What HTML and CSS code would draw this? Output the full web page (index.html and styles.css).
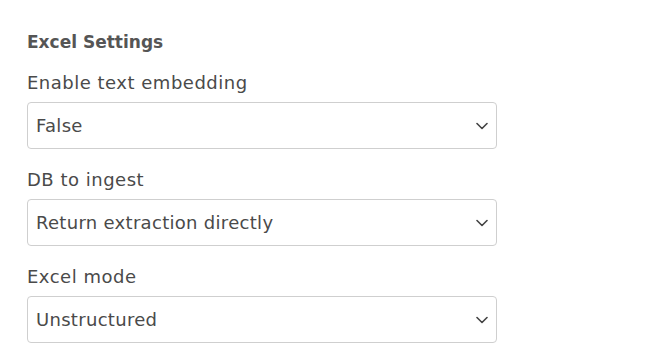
FILE: index.html
```html
<!DOCTYPE html>
<html>
<head>
<meta charset="utf-8">
<link rel="stylesheet" href="styles.css">
</head>
<body>
<div class="panel">
  <h2 class="title">Excel Settings</h2>
  <div class="field">
    <label class="label">Enable text embedding</label>
    <div class="select"><span>False</span><svg class="chev" width="12" height="8" viewBox="0 0 12 8"><path d="M1 1.5 L6 6.5 L11 1.5" fill="none" stroke="#444" stroke-width="1.6" stroke-linecap="round" stroke-linejoin="round"/></svg></div>
  </div>
  <div class="field">
    <label class="label">DB to ingest</label>
    <div class="select"><span>Return extraction directly</span><svg class="chev" width="12" height="8" viewBox="0 0 12 8"><path d="M1 1.5 L6 6.5 L11 1.5" fill="none" stroke="#444" stroke-width="1.6" stroke-linecap="round" stroke-linejoin="round"/></svg></div>
  </div>
  <div class="field">
    <label class="label">Excel mode</label>
    <div class="select"><span>Unstructured</span><svg class="chev" width="12" height="8" viewBox="0 0 12 8"><path d="M1 1.5 L6 6.5 L11 1.5" fill="none" stroke="#444" stroke-width="1.6" stroke-linecap="round" stroke-linejoin="round"/></svg></div>
  </div>
</div>
</body>
</html>
```
FILE: styles.css
```css
html, body {
  margin: 0;
  padding: 0;
  background: #fff;
}
.panel {
  padding: 31px 0 0 27px;
  width: 470px;
  font-family: "DejaVu Sans", Inter, sans-serif;
  color: #4a4a4a;
}
.title {
  margin: 0 0 18px 0;
  font-size: 17px;
  line-height: 22px;
  font-weight: 700;
  color: #555;
}
.field {
  display: flex;
  flex-direction: column;
  gap: 7px;
  margin-bottom: 19px;
}
.label {
  font-size: 18px;
  line-height: 24px;
  letter-spacing: 0.5px;
}
.select {
  box-sizing: border-box;
  height: 47px;
  border: 1px solid #cfcfcf;
  border-radius: 4px;
  display: flex;
  align-items: center;
  justify-content: space-between;
  padding: 0 8px 0 8px;
  font-size: 18px;
  letter-spacing: 0.3px;
}
.chev {
  display: block;
}
```
